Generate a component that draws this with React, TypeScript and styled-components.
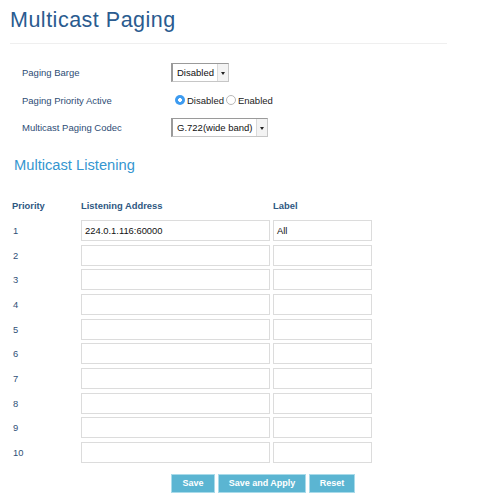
import React from "react";
import styled, { createGlobalStyle } from "styled-components";

const Global = createGlobalStyle`
  html, body { margin: 0; padding: 0; background: #fff; }
  body { font-family: "Liberation Sans", Arial, Helvetica, sans-serif; }
`;

const Page = styled.div`
  width: 489px;
  height: 500px;
  overflow: hidden;
`;

const Title = styled.h1`
  margin: 0;
  padding: 8px 0 0 10px;
  font-size: 21.5px;
  letter-spacing: 0.5px;
  font-weight: normal;
  line-height: 24px;
  color: #2a5b8f;
  white-space: nowrap;
`;

const Separator = styled.div`
  margin: 11px 0 0 10px;
  width: 437px;
  height: 1px;
  background: #efefef;
`;

const Form = styled.div`
  padding: 18.5px 0 0 22px;
  display: flex;
  flex-direction: column;
  gap: 7.5px;
`;

const FormRow = styled.div`
  display: grid;
  grid-template-columns: 149px auto;
  align-items: center;
  height: 20px;
`;

const FieldLabel = styled.span`
  font-size: 9.5px;
  color: #2d4c75;
  white-space: nowrap;
`;

const Select = styled.div<{ $w: number }>`
  width: ${(p) => p.$w}px;
  height: 19px;
  box-sizing: border-box;
  display: flex;
  align-items: stretch;
  border: 1px solid #c6c6c6;
  border-top-color: #9a9a9a;
  border-left: 2px solid #9a9a9a;
  background: #fff;
  font-size: 9.5px;
  color: #111;
  white-space: nowrap;
`;

const SelectText = styled.span`
  flex: 1;
  display: flex;
  align-items: center;
  padding-left: 4px;
  overflow: hidden;
`;

const SelectArrow = styled.span`
  width: 10px;
  border-left: 1px solid #dadada;
  background: #f3f3f3;
  display: flex;
  align-items: center;
  justify-content: center;
  &::after {
    content: "";
    border-left: 2px solid transparent;
    border-right: 2px solid transparent;
    border-top: 3px solid #222;
    margin-top: 1px;
  }
`;

const RadioGroup = styled.div`
  display: flex;
  align-items: center;
  padding-left: 4px;
  font-size: 9.5px;
  color: #222;
  white-space: nowrap;
`;

const RadioOption = styled.label`
  display: flex;
  align-items: center;
  gap: 2px;
  margin-right: 2px;
`;

const RadioDot = styled.span<{ $on?: boolean }>`
  width: 10px;
  height: 10px;
  box-sizing: border-box;
  border-radius: 50%;
  border: ${(p) => (p.$on ? "none" : "1px solid #b8b8b8")};
  background: ${(p) =>
    p.$on ? "radial-gradient(circle, #fff 0 1.6px, #3d9bf0 2.2px)" : "#fff"};
`;

const SectionTitle = styled.h2`
  margin: 18.7px 0 0 14px;
  font-size: 14.7px;
  font-weight: normal;
  line-height: 18px;
  color: #3596d0;
  white-space: nowrap;
`;

const Table = styled.div`
  margin: 25.4px 0 0 12px;
  display: grid;
  grid-template-columns: 69px 192px 99px;
  row-gap: 3.7px;
  align-items: center;
`;

const HeadCell = styled.span`
  font-size: 9.4px;
  font-weight: bold;
  color: #2e5882;
  height: 11px;
  line-height: 11px;
  margin-bottom: 5.7px;
  white-space: nowrap;
`;

const Num = styled.span`
  font-size: 9.4px;
  color: #2f5077;
  padding-left: 1px;
`;

const Input = styled.div<{ $w: number }>`
  width: ${(p) => p.$w}px;
  height: 21px;
  box-sizing: border-box;
  border: 1px solid #dcdcdc;
  background: #fff;
  font-size: 9.4px;
  color: #111;
  display: flex;
  align-items: center;
  padding-left: 3px;
  white-space: nowrap;
`;

const Buttons = styled.div`
  margin: 10.7px 0 0 171px;
  display: flex;
  gap: 3px;
`;

const Button = styled.button<{ $w: number }>`
  width: ${(p) => p.$w}px;
  height: 19px;
  box-sizing: border-box;
  border: 1px solid #a9dbea;
  background: #5bb5d2;
  color: #fff;
  font-family: "Liberation Sans", Arial, sans-serif;
  font-size: 9px;
  font-weight: bold;
  padding: 0;
  white-space: nowrap;
`;

const rows = [
  { n: "1", addr: "224.0.1.116:60000", label: "All" },
  ...Array.from({ length: 9 }, (_, i) => ({ n: String(i + 2), addr: "", label: "" })),
];

export default function App() {
  return (
    <Page>
      <Global />
      <Title>Multicast Paging</Title>
      <Separator />
      <Form>
        <FormRow>
          <FieldLabel>Paging Barge</FieldLabel>
          <Select $w={58}>
            <SelectText>Disabled</SelectText>
            <SelectArrow />
          </Select>
        </FormRow>
        <FormRow>
          <FieldLabel>Paging Priority Active</FieldLabel>
          <RadioGroup>
            <RadioOption>
              <RadioDot $on />
              Disabled
            </RadioOption>
            <RadioOption>
              <RadioDot />
              Enabled
            </RadioOption>
          </RadioGroup>
        </FormRow>
        <FormRow>
          <FieldLabel>Multicast Paging Codec</FieldLabel>
          <Select $w={97}>
            <SelectText>G.722(wide band)</SelectText>
            <SelectArrow />
          </Select>
        </FormRow>
      </Form>
      <SectionTitle>Multicast Listening</SectionTitle>
      <Table>
        <HeadCell>Priority</HeadCell>
        <HeadCell>Listening Address</HeadCell>
        <HeadCell>Label</HeadCell>
        {rows.map((r) => (
          <React.Fragment key={r.n}>
            <Num>{r.n}</Num>
            <Input $w={189}>{r.addr}</Input>
            <Input $w={99}>{r.label}</Input>
          </React.Fragment>
        ))}
      </Table>
      <Buttons>
        <Button $w={44}>Save</Button>
        <Button $w={88}>Save and Apply</Button>
        <Button $w={46}>Reset</Button>
      </Buttons>
    </Page>
  );
}
